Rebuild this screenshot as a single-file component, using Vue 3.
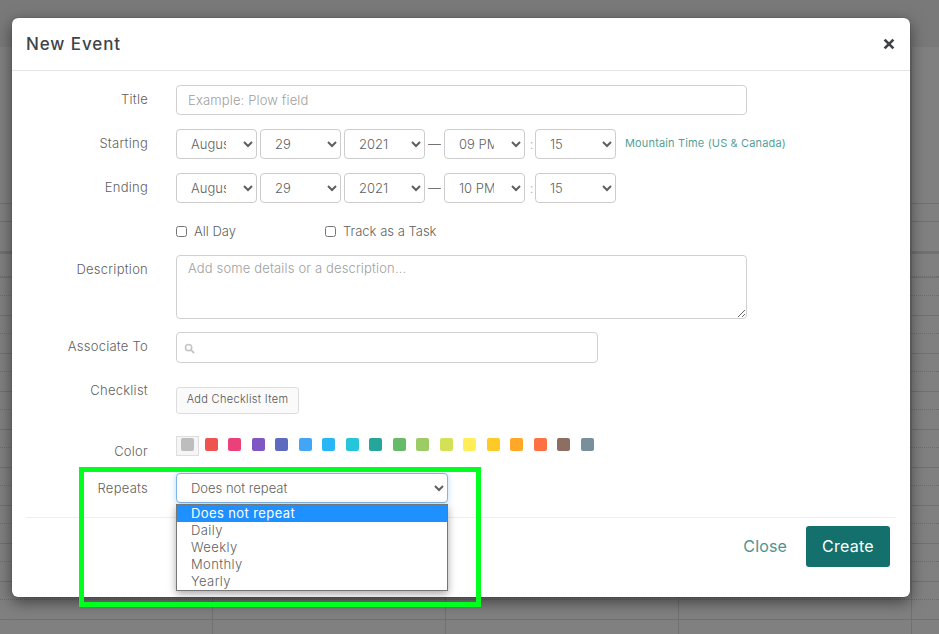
<script setup>
const months = ['August']
const swatches = ['#ef5350','#ec407a','#7e57c2','#5c6bc0','#42a5f5','#29b6f6','#26c6da','#26a69a','#66bb6a','#9ccc65','#d4e157','#ffee58','#ffca28','#ffa726','#ff7043','#8d6e63','#78909c']
const hours = Array.from({ length: 10 })
const options = ['Does not repeat', 'Daily', 'Weekly', 'Monthly', 'Yearly']
const rowsDate = [
  { label: 'Starting', hour: '09 PM', tz: true },
  { label: 'Ending', hour: '10 PM', tz: false }
]
</script>

<template>
  <div class="page">
    <div class="calendar">
      <div class="cal-head"></div>
      <div class="cal-grid">
        <div class="cal-space"></div>
        <div class="cal-allday"></div>
        <div class="cal-thick"></div>
        <div class="cal-first"></div>
        <template v-for="(h, i) in hours" :key="i">
          <div class="cal-half solid"></div>
          <div class="cal-half dotted"></div>
        </template>
      </div>
    </div>

    <div class="modal">
      <header class="modal-head">
        <h4>New Event</h4>
        <svg class="close-x" viewBox="0 0 12 12" width="12" height="12" aria-label="Close">
          <path d="M1.6 1.6 10.4 10.4M10.4 1.6 1.6 10.4" stroke="#3f4448" stroke-width="2.7" fill="none" />
        </svg>
      </header>

      <div class="form">
        <div class="row">
          <label>Title</label>
          <input class="control title" placeholder="Example: Plow field" />
        </div>

        <div v-for="r in rowsDate" :key="r.label" class="row">
          <label>{{ r.label }}</label>
          <div class="dates">
            <select class="control sel"><option v-for="m in months" :key="m">{{ m }}</option></select>
            <select class="control sel"><option>29</option></select>
            <select class="control sel"><option>2021</option></select>
            <span class="dash">—</span>
            <select class="control sel"><option>{{ r.hour }}</option></select>
            <span class="colon">:</span>
            <select class="control sel"><option>15</option></select>
            <a v-if="r.tz" class="tz">Mountain Time (US &amp; Canada)</a>
          </div>
        </div>

        <div class="row checks-row">
          <span></span>
          <div class="checks">
            <span class="check first"><input type="checkbox" />All Day</span>
            <span class="check"><input type="checkbox" />Track as a Task</span>
          </div>
        </div>

        <div class="row desc-row">
          <label>Description</label>
          <textarea class="control desc" placeholder="Add some details or a description..."></textarea>
        </div>

        <div class="row assoc-row">
          <label>Associate To</label>
          <div class="control assoc">
            <svg viewBox="0 0 12 12" width="11" height="11">
              <circle cx="5" cy="5" r="3.4" fill="none" stroke="#c4c4c4" stroke-width="1.7" />
              <path d="M7.6 7.6 11 11" stroke="#c4c4c4" stroke-width="2" />
            </svg>
          </div>
        </div>

        <div class="row check-row">
          <label>Checklist</label>
          <div><button class="add">Add Checklist Item</button></div>
        </div>

        <div class="row color-row">
          <label>Color</label>
          <div class="swatches">
            <span class="current"><i></i></span>
            <i v-for="c in swatches" :key="c" class="sw" :style="{ background: c }"></i>
          </div>
        </div>

        <div class="row repeat-row">
          <label>Repeats</label>
          <div class="repeat-wrap">
            <select class="control repeat"><option>Does not repeat</option></select>
            <ul class="menu">
              <li v-for="(o, i) in options" :key="o" :class="{ on: i === 0 }">{{ o }}</li>
            </ul>
          </div>
        </div>
      </div>

      <footer class="modal-foot">
        <a class="close-link">Close</a>
        <button class="create">Create</button>
      </footer>
    </div>

    <div class="annotation"></div>
  </div>
</template>

<style>
html, body { margin: 0; background: #808080; overflow: hidden; }
</style>

<style scoped>
.page {
  position: relative;
  width: 939px;
  height: 634px;
  overflow: hidden;
  background: #808080;
  font-family: Inter, "Liberation Sans", sans-serif;
  font-size: 13px;
  font-weight: 300;
  color: #5f5f5f;
}

/* dimmed calendar */
.cal-head { height: 47px; background: #797979; }
.cal-grid {
  height: 587px;
  overflow: hidden;
  background-image:
    linear-gradient(#717171, #717171), linear-gradient(#717171, #717171),
    linear-gradient(#717171, #717171), linear-gradient(#717171, #717171);
  background-size: 1px 100%;
  background-repeat: no-repeat;
  background-position: 212px 0, 445px 0, 678px 0, 911px 0;
}
.cal-space { height: 157px; box-sizing: border-box; border-bottom: 1px solid #717171; }
.cal-allday { height: 18px; box-sizing: border-box; border-bottom: 1px solid #717171; }
.cal-thick { height: 32px; box-sizing: border-box; border-bottom: 3px solid #717171; }
.cal-first { height: 23px; box-sizing: border-box; border-bottom: 1px dotted #6c6c6c; }
.cal-half { height: 19px; box-sizing: border-box; }
.cal-half.solid { border-bottom: 1px dotted #6c6c6c; border-top: 1px solid #717171; }

/* modal */
.modal {
  position: absolute;
  left: 12px;
  top: 18px;
  width: 898px;
  height: 579px;
  box-sizing: border-box;
  background: #fff;
  border-radius: 6px;
  box-shadow: 0 5px 15px rgba(0, 0, 0, 0.5), 0 0 1px rgba(0, 0, 0, 0.6);
  display: flex;
  flex-direction: column;
}
.modal-head {
  height: 53px;
  box-sizing: border-box;
  border-bottom: 1px solid #e5e5e5;
  padding: 0 15px 0 14px;
  display: flex;
  align-items: center;
  justify-content: space-between;
}
.modal-head h4 {
  margin: 0;
  font-size: 17px;
  font-weight: 500;
  color: #3f4448;
  letter-spacing: 0.9px;
}
.close-x { display: block; }

.form { padding-top: 14px; flex: 1; }
.row {
  display: grid;
  grid-template-columns: 136px 1fr;
  column-gap: 28px;
  margin-bottom: 14px;
  align-items: start;
}
.row > label {
  text-align: right;
  padding-top: 6px;
  line-height: 16px;
  letter-spacing: 0.25px;
}
.control {
  box-sizing: border-box;
  border: 1px solid #d0d0d0;
  border-radius: 4px;
  background: #fff;
  font: inherit;
  color: #5f5f5f;
  outline: none;
  display: block;
}
.control::placeholder { color: #a0a0a0; opacity: 1; }
.title { width: 571px; height: 30px; padding: 0 11px; letter-spacing: 0.15px; }
.dates { display: flex; align-items: center; height: 30px; }
.sel { width: 81px; height: 30px; padding: 0 14px 0 10px; margin-right: 3px; border-color: #ccc; }
.dash { width: 13px; margin-right: 3px; text-align: center; color: #555; font-size: 13px; overflow: hidden; white-space: nowrap; }
.colon { width: 7px; text-align: center; color: #999; }
.tz {
  margin-left: 6px;
  font-size: 11px;
  font-weight: 400;
  color: #559f9a;
  position: relative;
  top: -1px;
  letter-spacing: 0.15px;
  white-space: nowrap;
}
.checks-row { height: 24px; }
.checks { display: flex; align-items: center; height: 28px; }
.check { display: flex; align-items: center; white-space: nowrap; }
.check.first { width: 149px; }
.check input { margin: 0 7px 0 0; width: 11px; height: 11px; }
.desc-row { margin-bottom: 13px; }
.desc { width: 571px; height: 64px; padding: 4px 11px; resize: both; letter-spacing: 0.15px; }
.assoc-row { margin-bottom: 24px; }
.assoc { width: 422px; height: 31px; display: flex; align-items: center; padding-left: 7px; }
.assoc svg { margin-top: 2px; }
.check-row { margin-bottom: 22px; }
.check-row > label { padding-top: 0; margin-top: -5px; }
.add {
  display: block;
  width: 123px;
  height: 27px;
  box-sizing: border-box;
  padding: 0 0 3px;
  border: 1px solid #ddd;
  border-radius: 3px;
  background: #fafafa;
  font: inherit;
  font-size: 11px;
  font-weight: 300;
  letter-spacing: 0.32px;
  color: #555;
  white-space: nowrap;
}
.color-row { height: 23px; margin-bottom: 14px; }
.color-row > label { padding-top: 7px; }
.swatches { display: flex; align-items: flex-start; height: 20px; gap: 10.5px; }
.current {
  width: 23px;
  height: 20px;
  box-sizing: border-box;
  border: 1px solid #ddd;
  background: #f5f5f5;
  display: flex;
  align-items: flex-start;
  justify-content: center;
  margin-right: -5px;
}
.current i { width: 13px; height: 13px; margin-top: 1px; border-radius: 2px; background: #bdbdbd; }
.sw { width: 13px; height: 13px; margin-top: 2px; border-radius: 2px; display: block; }

.repeat-row > label { padding-top: 7px; }
.repeat-wrap { position: relative; }
.repeat {
  width: 272px;
  height: 30px;
  padding: 0 10px;
  border-color: #7fb6e6;
  box-shadow: 0 0 6px rgba(102, 175, 233, 0.45);
}
.menu {
  position: absolute;
  left: 0;
  top: 31px;
  width: 272px;
  box-sizing: border-box;
  margin: 0;
  padding: 0;
  list-style: none;
  background: #fff;
  border: 1px solid #767676;
  box-shadow: 0 3px 8px rgba(0, 0, 0, 0.35);
  z-index: 2;
}
.menu li { height: 17px; line-height: 17px; padding-left: 14px; letter-spacing: 0.4px; }
.menu li.on { background: #1e90ff; color: #fff; font-weight: 400; }

.modal-foot {
  margin: 0 14px;
  height: 80px;
  box-sizing: border-box;
  border-top: 1px solid #eee;
  padding: 8px 6px 0 0;
  display: flex;
  align-items: flex-start;
  justify-content: flex-end;
}
.close-link {
  font-size: 16px;
  font-weight: 400;
  color: #4a9490;
  margin-right: 19px;
  line-height: 41px;
  letter-spacing: 0.15px;
}
.create {
  width: 84px;
  height: 41px;
  padding: 0 0 2px;
  border: 0;
  border-radius: 3px;
  background: #14706d;
  color: #fff;
  font: inherit;
  font-size: 16px;
  font-weight: 400;
  letter-spacing: 0.25px;
}

.annotation {
  position: absolute;
  left: 79px;
  top: 467px;
  width: 402px;
  height: 140px;
  box-sizing: border-box;
  border: 5px solid #00ff1f;
  pointer-events: none;
}
</style>
